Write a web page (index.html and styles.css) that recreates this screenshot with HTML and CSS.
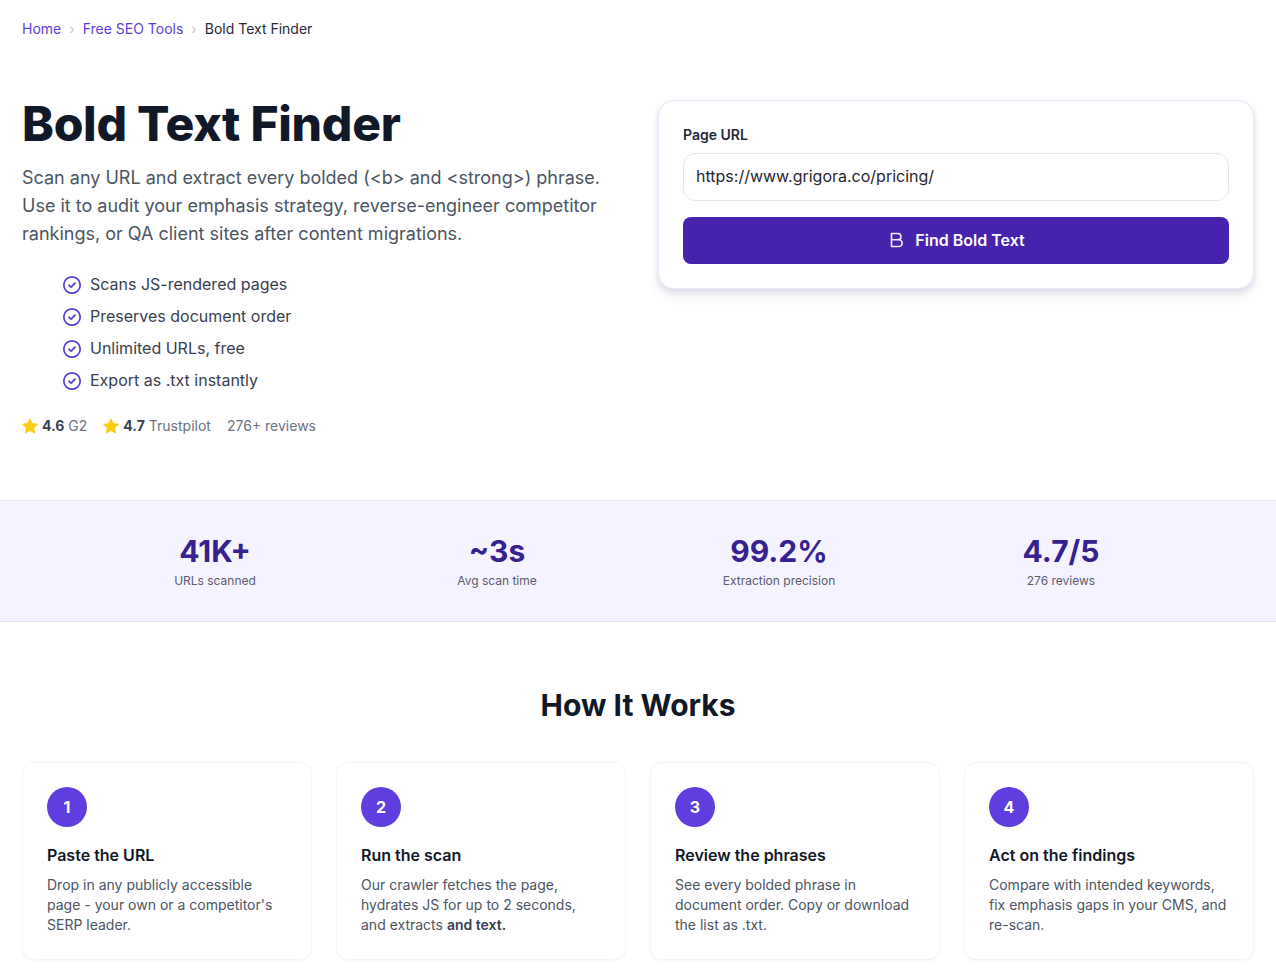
FILE: index.html
```html
<!DOCTYPE html>
<html lang="en">
<head>
    <meta charset="UTF-8">
    <meta name="viewport" content="width=device-width, initial-scale=1.0">
    <title>Bold Text Finder</title>
    <link rel="stylesheet" href="styles.css">
</head>
<body>

    <!-- Breadcrumb -->
    <nav class="breadcrumb">
        <a href="#">Home</a>
        <span class="crumb-sep">&#8250;</span>
        <a href="#">Free SEO Tools</a>
        <span class="crumb-sep">&#8250;</span>
        <span class="crumb-current">Bold Text Finder</span>
    </nav>

    <!-- Hero -->
    <section class="hero">
        <div class="hero-copy">
            <h1>Bold Text Finder</h1>
            <p class="hero-desc">Scan any URL and extract every bolded (&lt;b&gt; and &lt;strong&gt;) phrase. Use it to audit your emphasis strategy, reverse-engineer competitor rankings, or QA client sites after content migrations.</p>
            <ul class="check-list">
                <li>
                    <svg class="check-icon" viewBox="0 0 20 20" fill="none"><circle cx="10" cy="10" r="8.2" stroke="#5b3fd6" stroke-width="1.8"/><path d="M7 10.2l2.1 2 3.9-4" stroke="#5b3fd6" stroke-width="1.8" stroke-linecap="round" stroke-linejoin="round"/></svg>
                    Scans JS-rendered pages
                </li>
                <li>
                    <svg class="check-icon" viewBox="0 0 20 20" fill="none"><circle cx="10" cy="10" r="8.2" stroke="#5b3fd6" stroke-width="1.8"/><path d="M7 10.2l2.1 2 3.9-4" stroke="#5b3fd6" stroke-width="1.8" stroke-linecap="round" stroke-linejoin="round"/></svg>
                    Preserves document order
                </li>
                <li>
                    <svg class="check-icon" viewBox="0 0 20 20" fill="none"><circle cx="10" cy="10" r="8.2" stroke="#5b3fd6" stroke-width="1.8"/><path d="M7 10.2l2.1 2 3.9-4" stroke="#5b3fd6" stroke-width="1.8" stroke-linecap="round" stroke-linejoin="round"/></svg>
                    Unlimited URLs, free
                </li>
                <li>
                    <svg class="check-icon" viewBox="0 0 20 20" fill="none"><circle cx="10" cy="10" r="8.2" stroke="#5b3fd6" stroke-width="1.8"/><path d="M7 10.2l2.1 2 3.9-4" stroke="#5b3fd6" stroke-width="1.8" stroke-linecap="round" stroke-linejoin="round"/></svg>
                    Export as .txt instantly
                </li>
            </ul>
            <div class="ratings">
                <span class="rating">
                    <svg class="star" viewBox="1.1 1.200 17.800 17.300"><path d="M10 1.600l2.600 5.400 5.900.8-4.300 4.100 1.100 5.900-5.300-2.900-5.300 2.900 1.100-5.900L1.500 7.800l5.900-.8z" fill="#facc15" stroke="#facc15" stroke-width="0.8" stroke-linejoin="round"/></svg>
                    <b>4.6</b> G2
                </span>
                <span class="rating">
                    <svg class="star" viewBox="1.1 1.200 17.800 17.300"><path d="M10 1.600l2.600 5.400 5.900.8-4.300 4.100 1.100 5.900-5.300-2.900-5.300 2.900 1.100-5.900L1.500 7.800l5.900-.8z" fill="#facc15" stroke="#facc15" stroke-width="0.8" stroke-linejoin="round"/></svg>
                    <b>4.7</b> Trustpilot
                </span>
                <span class="rating">276+ reviews</span>
            </div>
        </div>

        <div class="tool-card">
            <label class="tool-label" for="page-url">Page URL</label>
            <input class="tool-input" id="page-url" type="text" value="https://www.grigora.co/pricing/">
            <button class="tool-button">
                <svg class="bold-icon" viewBox="0 0 16 16" fill="none"><path d="M2.500 1.500h6.300a3 3 0 0 1 0 6.300H2.500zM2.500 7.800h7.300a3.300 3.300 0 0 1 0 6.700H2.500z" stroke="#f3effe" stroke-width="1.600" stroke-linejoin="round"/></svg>
                Find Bold Text
            </button>
        </div>
    </section>

    <!-- Stats band -->
    <section class="stats">
        <div class="stats-row">
            <div class="stat"><div class="stat-value">41K+</div><div class="stat-label">URLs scanned</div></div>
            <div class="stat"><div class="stat-value">~3s</div><div class="stat-label">Avg scan time</div></div>
            <div class="stat"><div class="stat-value">99.2%</div><div class="stat-label">Extraction precision</div></div>
            <div class="stat"><div class="stat-value">4.7/5</div><div class="stat-label">276 reviews</div></div>
        </div>
    </section>

    <!-- How it works -->
    <section class="how">
        <h2>How It Works</h2>
        <div class="step-grid">
            <div class="step-card">
                <div class="step-num">1</div>
                <h3>Paste the URL</h3>
                <p>Drop in any publicly accessible page - your own or a competitor's SERP leader.</p>
            </div>
            <div class="step-card">
                <div class="step-num">2</div>
                <h3>Run the scan</h3>
                <p>Our crawler fetches the page, hydrates JS for up to 2 seconds, and extracts <strong>and text.</strong></p>
            </div>
            <div class="step-card">
                <div class="step-num">3</div>
                <h3>Review the phrases</h3>
                <p>See every bolded phrase in document order. Copy or download the list as .txt.</p>
            </div>
            <div class="step-card">
                <div class="step-num">4</div>
                <h3>Act on the findings</h3>
                <p>Compare with intended keywords, fix emphasis gaps in your CMS, and re-scan.</p>
            </div>
        </div>
    </section>

</body>
</html>
```

FILE: styles.css
```css
body {
    font-family: 'Inter', 'Liberation Sans', sans-serif;
    background-color: #ffffff;
    color: #111827;
    margin: 0;
    height: 980px;
    overflow: hidden;
}
.breadcrumb {
    display: flex;
    align-items: center;
    gap: 8px;
    padding: 20px 22px 0;
    font-size: 14px;
    line-height: 18px;
}
.breadcrumb a {
    color: #5b3fd6;
    text-decoration: none;
}
.crumb-sep {
    color: #c4c7cf;
}
.crumb-current {
    color: #1f2937;
}
.hero {
    display: grid;
    grid-template-columns: 1fr 1fr;
    gap: 40px;
    padding: 62px 22px 0;
    height: 462px;
    box-sizing: border-box;
}
.hero-copy h1 {
    font-size: 48px;
    font-weight: 800;
    line-height: 48px;
    letter-spacing: -0.25px;
    margin: 0 0 16px;
    color: #111827;
}
.hero-desc {
    font-size: 18px;
    line-height: 28px;
    color: #4b5563;
    margin: 0 0 20px;
}
.check-list {
    list-style: none;
    margin: 0 0 16px;
    padding: 0 0 0 40px;
}
.check-list li {
    display: flex;
    align-items: center;
    gap: 8px;
    font-size: 16px;
    line-height: 32px;
    color: #374151;
}
.check-icon {
    width: 20px;
    height: 20px;
    margin-top: 2px;
}
.ratings {
    display: flex;
    gap: 16px;
    font-size: 14px;
    line-height: 28px;
    color: #6b7280;
}
.rating {
    display: flex;
    align-items: center;
    gap: 4px;
}
.rating b {
    color: #374151;
    font-weight: 700;
}
.star {
    width: 16px;
    height: 16px;
}
.tool-card {
    background-color: #ffffff;
    border: 1px solid #ebe8fb;
    border-radius: 16px;
    padding: 24px;
    height: 189px;
    box-sizing: border-box;
    box-shadow: 0 4px 6px rgba(30, 20, 90, 0.1), 0 8px 18px rgba(30, 20, 90, 0.06);
}
.tool-label {
    display: block;
    font-size: 14px;
    font-weight: 600;
    line-height: 20px;
    color: #1f2937;
    margin-bottom: 8px;
}
.tool-input {
    display: block;
    width: 100%;
    height: 48px;
    box-sizing: border-box;
    border: 1px solid #e5e7eb;
    border-radius: 12px;
    padding: 0 12px 2px;
    font-family: inherit;
    font-size: 16px;
    color: #27272f;
    margin-bottom: 16px;
}
.tool-button {
    display: flex;
    align-items: center;
    justify-content: center;
    gap: 10px;
    width: 100%;
    height: 47px;
    border: none;
    border-radius: 8px;
    padding: 0 0 2px 2px;
    background-color: #4622ad;
    color: #ffffff;
    font-family: inherit;
    font-size: 16px;
    font-weight: 600;
}
.bold-icon {
    width: 16px;
    height: 16px;
}
.stats {
    background-color: #f5f3ff;
    border-top: 1px solid #e7e3f7;
    border-bottom: 1px solid #e7e3f7;
    height: 122px;
    box-sizing: border-box;
    padding-top: 32px;
}
.stats-row {
    display: grid;
    grid-template-columns: repeat(4, 1fr);
    width: 1128px;
    margin: 0 auto;
}
.stat {
    text-align: center;
}
.stat-value {
    font-size: 30px;
    font-weight: 700;
    line-height: 36px;
    color: #37208f;
}
.stat-label {
    font-size: 12px;
    line-height: 22px;
    margin-top: 1px;
    color: #5b5b6e;
}
.how {
    padding: 65px 22px 0;
}
.how h2 {
    font-size: 30px;
    font-weight: 700;
    line-height: 36px;
    text-align: center;
    margin: 0 0 39px;
    color: #111827;
}
.step-grid {
    display: grid;
    grid-template-columns: repeat(4, 1fr);
    gap: 24px;
}
.step-card {
    background-color: #ffffff;
    border: 1px solid #f5f5f7;
    border-radius: 12px;
    padding: 24px;
    height: 198px;
    box-sizing: border-box;
    box-shadow: 0 1px 3px rgba(0, 0, 0, 0.04);
}
.step-num {
    display: flex;
    align-items: center;
    justify-content: center;
    width: 40px;
    height: 40px;
    border-radius: 50%;
    background-color: #5f3dde;
    color: #ffffff;
    font-size: 16px;
    font-weight: 700;
    margin-bottom: 16px;
}
.step-card h3 {
    font-size: 16px;
    font-weight: 600;
    line-height: 24px;
    margin: 0 0 8px;
    color: #111827;
}
.step-card p {
    font-size: 14px;
    line-height: 20px;
    color: #4b5563;
    margin: 0;
}
.step-card p strong {
    font-weight: 600;
    color: #374151;
}
```
